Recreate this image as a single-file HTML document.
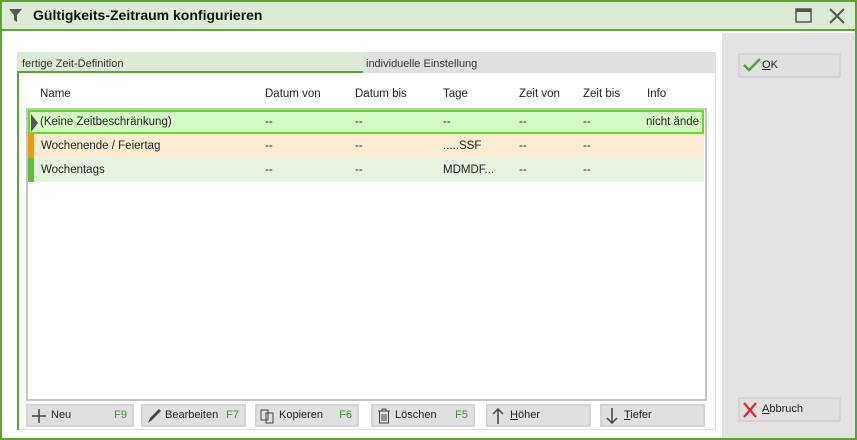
<!DOCTYPE html>
<html><head><style>
*{margin:0;padding:0;box-sizing:border-box}
body{width:857px;height:440px;font-family:"Liberation Sans","DejaVu Sans",sans-serif;font-size:11.5px;color:#222;position:relative;overflow:hidden;background:#fff}
.a{position:absolute}
.btn{position:absolute;height:23px;background:#e0e0e0;border:2px solid #d4d4d4;font-size:11px;line-height:19px;color:#222}
.btn .k{position:absolute;right:5px;top:0;color:#3a9a2a}
.row{position:absolute;left:28px;width:676px;height:24px;line-height:24px}
.row span{position:absolute}
</style></head><body>
<div class="a" style="left:0;top:0;width:857px;height:440px;border:2px solid #5ca334"></div>
<div class="a" style="left:2px;top:2px;width:853px;height:29px;background:#dcebd5;border-bottom:2px solid #5ca334"></div>
<svg class="a" style="left:9px;top:9px" width="14" height="14"><path d="M0 0H13L8 6V13L5 11V6Z" fill="#555"/></svg>
<div class="a" style="left:33px;top:7px;font-weight:bold;font-size:14px;color:#111">Gültigkeits-Zeitraum konfigurieren</div>
<svg class="a" style="left:795px;top:8px" width="18" height="16"><rect x="1" y="1" width="15" height="13" fill="none" stroke="#555" stroke-width="1.5"/><rect x="1" y="1" width="15" height="3" fill="#555"/></svg>
<svg class="a" style="left:829px;top:8px" width="16" height="16"><path d="M1 1L15 15M15 1L1 15" stroke="#555" stroke-width="2"/></svg>
<div class="a" style="left:722px;top:33px;width:133px;height:405px;background:#e3e3e3"></div>
<div class="a" style="left:17px;top:52px;width:346px;height:21px;background:#dcebd5;border-bottom:2px solid #5ca334"></div>
<div class="a" style="left:22px;top:58px;color:#333;font-size:11px">fertige Zeit-Definition</div>
<div class="a" style="left:363px;top:52px;width:353px;height:21px;background:#e0e0e0"></div>
<div class="a" style="left:366px;top:58px;color:#333;font-size:11px">individuelle Einstellung</div>
<div class="a" style="left:17px;top:73px;width:2px;height:357px;background:#5ca334"></div>
<div class="a" style="left:19px;top:429px;width:697px;height:1px;background:#d6e8cc"></div>
<div class="a" style="left:715px;top:73px;width:1px;height:357px;background:#d6e8cc"></div>
<div class="a" style="left:26px;top:108px;width:681px;height:293px;border:2px solid #c4c4c4"></div>
<div class="a" style="top:88px;left:40px">Name</div>
<div class="a" style="top:88px;left:265px">Datum von</div>
<div class="a" style="top:88px;left:355px">Datum bis</div>
<div class="a" style="top:88px;left:443px">Tage</div>
<div class="a" style="top:88px;left:519px">Zeit von</div>
<div class="a" style="top:88px;left:583px">Zeit bis</div>
<div class="a" style="top:88px;left:647px">Info</div>
<div class="row" style="top:110px;background:#d4fcc4;border:2px solid #5ce020;line-height:20px">
<svg class="a" style="left:1px;top:2px" width="8" height="18"><path d="M0 0L7 9L0 18Z" fill="#555"/></svg>
<span style="left:10px">(Keine Zeitbeschränkung)</span><span style="left:235px">--</span><span style="left:325px">--</span><span style="left:413px">--</span><span style="left:489px">--</span><span style="left:553px">--</span><span style="left:616px">nicht ände</span></div>
<div class="row" style="top:134px;background:#fdebd4;border-bottom:1px solid #eee"><div class="a" style="left:0;top:0;width:6px;height:24px;background:#f49a00"></div>
<span style="left:13px">Wochenende / Feiertag</span><span style="left:237px">--</span><span style="left:327px">--</span><span style="left:415px">.....SSF</span><span style="left:491px">--</span><span style="left:555px">--</span></div>
<div class="row" style="top:158px;background:#e6f3e0;border-bottom:1px solid #eee"><div class="a" style="left:0;top:0;width:6px;height:24px;background:#5cbe3c"></div>
<span style="left:13px">Wochentags</span><span style="left:237px">--</span><span style="left:327px">--</span><span style="left:415px">MDMDF...</span><span style="left:491px">--</span><span style="left:555px">--</span></div>

<div class="btn" style="left:26px;top:404px;width:108px"><svg class="a" style="left:4px;top:3px" width="14" height="14"><path d="M7 0V14M0 7H14" stroke="#444" stroke-width="1.5"/></svg><span class="a" style="left:23px">Neu</span><span class="k">F9</span></div>
<div class="btn" style="left:141px;top:404px;width:105px"><svg class="a" style="left:3px;top:2px" width="16" height="16"><path d="M2 15L4 10L13 1L15 3L6 12Z" fill="#444"/></svg><span class="a" style="left:22px">Bearbeiten</span><span class="k">F7</span></div>
<div class="btn" style="left:255px;top:404px;width:104px"><svg class="a" style="left:3px;top:2px" width="16" height="16"><path d="M1 2H8V12H1Z M6 5H13V15H6Z" fill="none" stroke="#444"/></svg><span class="a" style="left:22px">Kopieren</span><span class="k">F6</span></div>
<div class="btn" style="left:371px;top:404px;width:104px"><svg class="a" style="left:4px;top:2px" width="14" height="16"><path d="M1 3H13M5 3V1H9V3M2.5 3V15H11.5V3M5 6V13M7 6V13M9 6V13" fill="none" stroke="#444"/></svg><span class="a" style="left:22px">Löschen</span><span class="k">F5</span></div>
<div class="btn" style="left:486px;top:404px;width:105px"><svg class="a" style="left:4px;top:2px" width="12" height="16"><path d="M6 1V16M1 6L6 1L11 6" fill="none" stroke="#444" stroke-width="1.5"/></svg><span class="a" style="left:22px"><u>H</u>öher</span></div>
<div class="btn" style="left:600px;top:404px;width:105px"><svg class="a" style="left:4px;top:2px" width="12" height="16"><path d="M6 0V15M1 10L6 15L11 10" fill="none" stroke="#444" stroke-width="1.5"/></svg><span class="a" style="left:22px"><u>T</u>iefer</span></div>

<div class="btn" style="left:738px;top:53px;width:103px;height:25px;line-height:21px"><svg class="a" style="left:3px;top:3px" width="18" height="14"><path d="M1 7L6 12L17 1" fill="none" stroke="#4aa33a" stroke-width="2.5"/></svg><span class="a" style="left:22px"><u>O</u>K</span></div>
<div class="btn" style="left:738px;top:397px;width:103px;height:25px;line-height:21px"><svg class="a" style="left:3px;top:3px" width="14" height="16"><path d="M1 1L13 15M13 1L1 15" stroke="#e0242a" stroke-width="2.2"/></svg><span class="a" style="left:22px"><u>A</u>bbruch</span></div>
</body></html>
